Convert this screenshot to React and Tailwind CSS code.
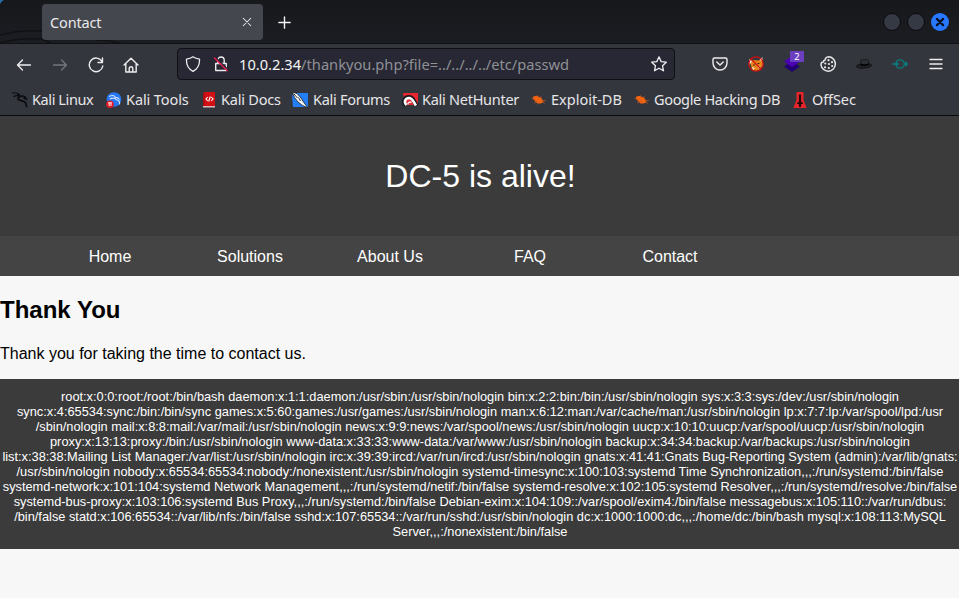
import React from "react";

const uiFont = "font-['Noto_Sans','Open_Sans',sans-serif]";

function Stroke({ size = 16, className = "", children, w = 1.3 }) {
  return (
    <svg width={size} height={size} viewBox="0 0 16 16" fill="none" stroke="currentColor" strokeWidth={w} strokeLinecap="round" strokeLinejoin="round" className={"block shrink-0 " + className}>
      {children}
    </svg>
  );
}

function Dragon() {
  return (
    <svg width="16" height="16" viewBox="0 0 16 16" fill="none" stroke="#0b0c0f" className="block shrink-0">
      <path d="M0 1C3 .4 6 .8 8 3.200M1.500 4.800c2-1.500 4-1.500 6-.6" strokeWidth="1.200" />
      <path d="M5.500 2l3 2.500c-2.400.6-3.400 2-1.800 3.300 2 1.100 5.200.7 6.800 3 .9 1.500 1 3 1 4.500" strokeWidth="1.700" />
      <path d="M8.500 4.400c2.500-.9 4.800.2 6 2.600l-3-1" strokeWidth="1.400" />
    </svg>
  );
}

function ToolsIcon() {
  return (
    <svg width="16" height="16" viewBox="0 0 16 16" className="block shrink-0">
      <circle cx="8" cy="7.500" r="7.300" fill="#2578f2" />
      <path d="M3 4.500c3-1.500 5.500-1 6.500 1-1 2 1 2.200 2.500 2.800 1.600.7 1.800 2.400 1.500 4M4 7c1.500-1.200 3.500-1 5-.5M9.500 5.500c2-.3 3.200.5 4 2" fill="none" stroke="#cfe2ff" strokeWidth="1.100" />
      <circle cx="4" cy="12.200" r="3.800" fill="#e01b24" />
      <path d="M2 10.800h4M3.200 11v3M5 11v3" stroke="#fff" strokeWidth=".9" />
    </svg>
  );
}

function DocsIcon() {
  return (
    <svg width="13" height="16" viewBox="0 0 13 16" className="block shrink-0">
      <path d="M0 1.500L1.500 0H12v14H0z" fill="#d20f14" />
      <path d="M0 1.500L1.500 0v14H0z" fill="#a80d12" />
      <path d="M0 14H12V15.500H0z" fill="#d9b9ba" />
      <path d="M4.700 5L3 7l1.700 2M8.300 5L10 7 8.300 9M7.300 4.500L5.700 9.500" fill="none" stroke="#fff" strokeWidth="1.100" />
    </svg>
  );
}

function ForumsIcon() {
  return (
    <svg width="16" height="16" viewBox="0 0 16 16" className="block shrink-0">
      <path d="M0 3L5 1h11v14H1z" fill="#247ff5" />
      <path d="M0 0l5 1.500 4 4.500 2.500 4 4.500 6-5.500-2.500L6 10 2.500 5.500z" fill="#f3f4f4" stroke="#17191d" strokeWidth=".8" />
      <path d="M1.500 1.500l4 4.500M6.500 5.500l2 3.500" stroke="#17191d" strokeWidth=".9" />
    </svg>
  );
}

function NetHunterIcon() {
  return (
    <svg width="16" height="16" viewBox="0 0 16 16" className="block shrink-0">
      <path d="M1 1h15v12H3z" fill="#e9252f" />
      <path d="M4 13.500C0 10 2.500 5 7 5c3.500 0 4.500 3 7.500 8.500" fill="none" stroke="#16181c" strokeWidth="4" />
      <path d="M4.500 13C1.500 10 3 6.300 7 6c3.500 0 4.500 3.500 7 7.500" fill="none" stroke="#fff" strokeWidth="2.600" />
      <path d="M6 12.500c-.3-2 1.500-3.200 3.500-2" fill="none" stroke="#e9e9ea" strokeWidth="1.500" />
    </svg>
  );
}

function BugIcon() {
  return (
    <svg width="16" height="16" viewBox="0 0 16 16" className="block shrink-0">
      <path d="M2 4.800c3.500-2.300 8.500.2 10.500 4.700-2 3-6.500 2.800-8.500-.5C2.500 7.800 1.700 6.300 2 4.800z" fill="#f26411" />
      <path d="M0 6l4 2M3 11l4-2M6 3l2 3M9.500 4l1.500 3.500M11 8.500h4M6 12.500l2-2M11 9.500l3 2" stroke="#b9541f" strokeWidth=".7" />
    </svg>
  );
}

function OffSecIcon() {
  return (
    <svg width="14" height="16" viewBox="0 0 14 16" className="block shrink-0">
      <path d="M3.500 0h7v8L13.800 16H.2L3.500 8z" fill="#e3262b" />
      <path d="M6 2.500h2v7l2.500 2-2.500.7V15H6v-2.800l-2.500-.7L6 9.500z" fill="#24080b" />
    </svg>
  );
}

function FoxIcon() {
  return (
    <svg width="16" height="16" viewBox="0 0 16 16" className="block">
      <path d="M1.500 5l4-1 5 .5 4-2 .5 6-2.500 4.500-4.500 2-4-1.500-1-4z" fill="#e8831b" />
      <path d="M1 3l3 2-2.500 4zM14.500 1l-.5 4-2.500-1z" fill="#f3f0eb" />
      <path d="M4 11l3 1-2 2zM9.500 10.500l3-.5-1.500 2.500z" fill="#f7e3bd" />
      <path d="M5 9h2M9.500 7.500h2" stroke="#4c2411" />
      <circle cx="8" cy="8" r="7.200" fill="none" stroke="#cd1111" strokeWidth="1.200" />
      <path d="M3 3l10 10" stroke="#cd1111" strokeWidth="1.200" />
    </svg>
  );
}

function LayersIcon() {
  return (
    <div className="relative h-4 w-4">
      <svg width="16" height="16" viewBox="0 0 16 16" className="block">
        <path d="M0 10.500L8 5l8 5.500L8 16z" fill="#21006f" />
        <path d="M0 5.500L8 0l8 5.500L8 11z" fill="#4b00b4" />
      </svg>
      <span className="absolute -top-[5px] left-[6px] h-[11px] w-[14px] rounded-[1px] bg-[#6c3fc0] text-center text-[9.500px] leading-[11px] text-white">2</span>
    </div>
  );
}

function CookieIcon() {
  return (
    <svg width="16" height="16" viewBox="0 0 16 16" className="block">
      <path d="M9 .8A7.200 7.200 0 1 1 1 9c0-1 .2-1.700.5-2.500 1.200.3 2.300-.4 2.200-1.800C5 4.500 5.700 3.700 5.500 2.300 6.500 1.200 7.500.8 9 .8z" fill="none" stroke="#e8e8ea" strokeWidth="1.500" />
      {[[8.5, 4.2], [12, 6.2], [5.3, 7.5], [9, 8], [12.2, 10], [5, 11.3], [8.8, 12]].map(([x, y]) => (
        <circle key={x + "-" + y} cx={x} cy={y} r="1.100" fill="#e8e8ea" />
      ))}
    </svg>
  );
}

function HatIcon() {
  return (
    <svg width="16" height="16" viewBox="0 0 16 16" className="block">
      <ellipse cx="8" cy="9.800" rx="7.500" ry="2.300" fill="#232528" stroke="#0b0b0c" strokeWidth=".8" transform="rotate(-5 8 9.800)" />
      <path d="M4.500 9.200l.4-5c2-.8 5.500-.8 7.500 0l.4 4.500c-2 1.200-6 1.500-8.300.5z" fill="#2d3034" stroke="#0b0b0c" strokeWidth=".6" />
      <path d="M4.500 7.500c2.500 1 6 .8 8.200 0v1.500c-2.200 1.100-6 1.200-8.300.3z" fill="#050506" />
    </svg>
  );
}

function ProxyIcon() {
  return (
    <svg width="16" height="16" viewBox="0 0 16 16" className="block" fill="none" stroke="#0c7b7b" strokeWidth="1.300">
      <circle cx="8" cy="8" r="4.200" />
      <path d="M0 8h6M4.500 6.500L6.300 8 4.500 9.500M12 8h3.500M13 5.800L15.500 8 13 10.200" />
    </svg>
  );
}

function LockIcon() {
  return (
    <svg width="16" height="16" viewBox="0 0 16 16" className="block" fill="none">
      <path d="M2.700 7.500h10.600v7H2.700zM4.800 7.500V4.200a3.200 3.200 0 0 1 6.400 0v3.300" stroke="#ececef" strokeWidth="1.400" strokeLinejoin="round" />
      <path d="M2.500 1.500l12.500 12" stroke="#272833" strokeWidth="1.500" />
      <path d="M1 1.500l13.500 13.500" stroke="#e6194f" strokeWidth="1.400" />
    </svg>
  );
}

const bookmarks = [
  ["Kali Linux", Dragon, "w-[94px]", "w-[20px]", "tracking-[-0.4px]"],
  ["Kali Tools", ToolsIcon, "w-[97px]", "w-[20px]", "tracking-[-0.1px]"],
  ["Kali Docs", DocsIcon, "w-[89px]", "w-[18px]", "tracking-[-0.2px]"],
  ["Kali Forums", ForumsIcon, "w-[110px]", "w-[21px]", "tracking-[-0.28px]"],
  ["Kali NetHunter", NetHunterIcon, "w-[129px]", "w-[20px]", "tracking-[-0.27px]"],
  ["Exploit-DB", BugIcon, "w-[103px]", "w-[20px]", "tracking-normal"],
  ["Google Hacking DB", BugIcon, "w-[159px]", "w-[20px]", "tracking-[-0.33px]"],
  ["OffSec", OffSecIcon, "w-[70px]", "w-[19px]", "tracking-[-0.1px]"],
];

const extensions = [FoxIcon, LayersIcon, CookieIcon, HatIcon, ProxyIcon];

const passwd = [
  "root:x:0:0:root:/root:/bin/bash daemon:x:1:1:daemon:/usr/sbin:/usr/sbin/nologin bin:x:2:2:bin:/bin:/usr/sbin/nologin sys:x:3:3:sys:/dev:/usr/sbin/nologin",
  "sync:x:4:65534:sync:/bin:/bin/sync games:x:5:60:games:/usr/games:/usr/sbin/nologin man:x:6:12:man:/var/cache/man:/usr/sbin/nologin lp:x:7:7:lp:/var/spool/lpd:/usr",
  "/sbin/nologin mail:x:8:8:mail:/var/mail:/usr/sbin/nologin news:x:9:9:news:/var/spool/news:/usr/sbin/nologin uucp:x:10:10:uucp:/var/spool/uucp:/usr/sbin/nologin",
  "proxy:x:13:13:proxy:/bin:/usr/sbin/nologin www-data:x:33:33:www-data:/var/www:/usr/sbin/nologin backup:x:34:34:backup:/var/backups:/usr/sbin/nologin",
  "list:x:38:38:Mailing List Manager:/var/list:/usr/sbin/nologin irc:x:39:39:ircd:/var/run/ircd:/usr/sbin/nologin gnats:x:41:41:Gnats Bug-Reporting System (admin):/var/lib/gnats:",
  "/usr/sbin/nologin nobody:x:65534:65534:nobody:/nonexistent:/usr/sbin/nologin systemd-timesync:x:100:103:systemd Time Synchronization,,,:/run/systemd:/bin/false",
  "systemd-network:x:101:104:systemd Network Management,,,:/run/systemd/netif:/bin/false systemd-resolve:x:102:105:systemd Resolver,,,:/run/systemd/resolve:/bin/false",
  "systemd-bus-proxy:x:103:106:systemd Bus Proxy,,,:/run/systemd:/bin/false Debian-exim:x:104:109::/var/spool/exim4:/bin/false messagebus:x:105:110::/var/run/dbus:",
  "/bin/false statd:x:106:65534::/var/lib/nfs:/bin/false sshd:x:107:65534::/var/run/sshd:/usr/sbin/nologin dc:x:1000:1000:dc,,,:/home/dc:/bin/bash mysql:x:108:113:MySQL",
  "Server,,,:/nonexistent:/bin/false",
];

function TabBar() {
  return (
    <div className="relative flex h-11 items-start overflow-hidden border-b border-[#0f1013] bg-linear-to-b from-[#16181c] to-[#1c1d22] pt-1 pl-[42px]">
      <svg width="130" height="43" viewBox="0 0 130 43" fill="none" className="absolute top-0 left-0">
        <path d="M0 0h4C2 1 1 2 0 4z" fill="#2a6cab" />
        <path d="M0 35c14-4 28-5 45-4M0 43c12-4 26-5 42-4M42 39l8 4M96 40c10 0 16 1 24 3" stroke="#101114" strokeWidth="1.500" />
      </svg>
      <div className="relative flex h-9 w-[221px] items-center justify-between rounded-[4px] bg-[#45474e] pr-[10px] pl-2 text-[#e9e9eb]">
        <span className="pt-0.5 text-[14.500px] tracking-[-0.15px]">Contact</span>
        <Stroke size={12} w={1.4}><path d="M3 3l10 10M13 3L3 13" /></Stroke>
      </div>
      <div className="mt-[11px] ml-[14px] text-[#f2f2f4]">
        <Stroke size={15} w={1.5}><path d="M8 2v12M2 8h12" /></Stroke>
      </div>
      <div className="mt-[9px] mr-[10px] ml-auto flex items-center gap-[6px]">
        <span className="h-[18px] w-[18px] rounded-full border border-[#08090b] bg-[#353944]" />
        <span className="h-[18px] w-[18px] rounded-full border border-[#08090b] bg-[#353944]" />
        <span className="flex h-[18px] w-[18px] items-center justify-center rounded-full bg-[#2777ff] text-[#0b1020]">
          <Stroke size={10} w={3.4}><path d="M3 3l10 10M13 3L3 13" /></Stroke>
        </span>
      </div>
    </div>
  );
}

function NavBar() {
  return (
    <div className="flex h-10 items-center text-[#ededf0]">
      <div className="flex w-[177px] items-center gap-5 pt-px pl-4">
        <Stroke><path d="M14.500 8H1.500M6.500 3L1.500 8l5 5" /></Stroke>
        <Stroke className="text-[#74767c]"><path d="M1.500 8h13M9.500 3l5 5-5 5" /></Stroke>
        <Stroke w={1.400}><path d="M14 4.500A6.800 6.800 0 1 0 14.800 9M14.500 1v4.500H10" /></Stroke>
        <Stroke w={1.400} className="-ml-px"><path d="M1 8l7-6.800L15 8M2.800 6.800V15h10.400V6.800M6.200 15v-3.500a1.800 1.800 0 0 1 3.600 0V15" /></Stroke>
      </div>
      <div className="flex h-8 w-[498px] items-center rounded-[4px] border border-[#0f1014] bg-[#272833] pr-[7px] pl-[7px]">
        <Stroke><path d="M8 .8c2 1.500 4 2 6.500 2.300.3 5-1 9.400-6.500 12.200C2.500 12.500 1.200 8.100 1.500 3.100 4 2.800 6 2.300 8 .8z" /></Stroke>
        <span className="ml-3"><LockIcon /></span>
        <span className="ml-[10px] text-[14.667px] whitespace-pre text-[#f4f4f6]">10.0.2.34<span className="text-[#8f9097]">/thankyou.php?file=../../../../etc/passwd</span></span>
        <Stroke className="ml-auto"><path d="M8 .9l2.200 4.700 5.100.6-3.800 3.500 1 5.100L8 12.300l-4.500 2.500 1-5.100L.7 6.200l5.100-.6z" /></Stroke>
      </div>
      <div className="ml-auto flex items-center gap-5 pr-[15px]">
        <Stroke w={1.400}><path d="M2.500 2h11a1.500 1.500 0 0 1 1.500 1.500V7A7 7 0 0 1 1 7V3.500A1.500 1.500 0 0 1 2.500 2zM4.800 6L8 9l3.200-3" /></Stroke>
        {extensions.map((Icon, i) => <Icon key={i} />)}
        <Stroke><path d="M2 3.500h12M2 8h12M2 12.500h12" /></Stroke>
      </div>
    </div>
  );
}

function Bookmarks() {
  return (
    <div className="flex h-[31px] items-center overflow-hidden pl-3 text-[14.500px] whitespace-nowrap text-[#e6e6e9]">
      {bookmarks.map(([label, Icon, width, slot, tracking]) => (
        <div key={label} className={"flex shrink-0 items-center " + width}>
          <span className={"shrink-0 " + slot}><Icon /></span>
          <span className={tracking}>{label}</span>
        </div>
      ))}
    </div>
  );
}

export default function App() {
  return (
    <div className="h-[598px] w-[959px] overflow-hidden bg-[#f7f7f7] font-['Liberation_Sans',Arial,sans-serif]">
      <div className={uiFont + " h-[116px] border-b border-[#0c0c0d] bg-[#34363d]"}>
        <TabBar />
        <NavBar />
        <Bookmarks />
      </div>
      <header className="flex h-[120px] items-center justify-center bg-[#3b3b3b] pl-0.5 text-[32px] text-white">
        <h1>DC-5 is alive!</h1>
      </header>
      <nav className="flex h-10 items-center bg-[#444444] pt-0.5 pl-10 text-base text-white">
        {["Home", "Solutions", "About Us", "FAQ", "Contact"].map((item) => (
          <a key={item} className="w-[140px] text-center">{item}</a>
        ))}
      </nav>
      <main className="h-[103px] pt-5 text-black">
        <h2 className="text-2xl leading-7 font-bold">Thank You</h2>
        <p className="mt-[21px] text-base leading-[18px]">Thank you for taking the time to contact us.</p>
      </main>
      <footer className="flex h-[170px] flex-col items-center bg-[#3b3b3b] pt-[10px] pl-px text-[12.8px] leading-[15px] whitespace-nowrap text-white">
        {passwd.map((line) => <div key={line}>{line}</div>)}
      </footer>
    </div>
  );
}
